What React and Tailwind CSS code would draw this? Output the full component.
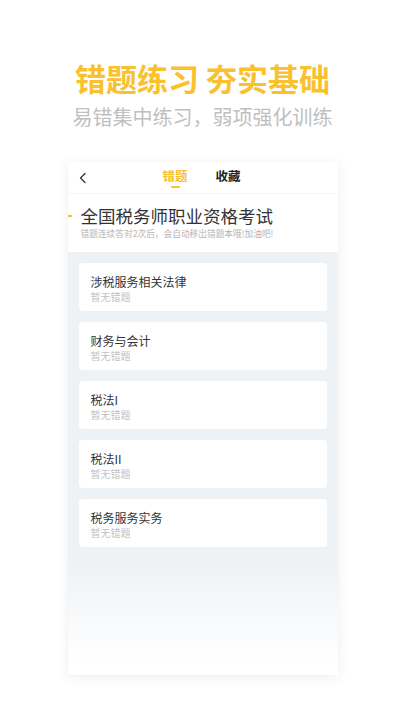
import React from "react";

const subjects = ["涉税服务相关法律", "财务与会计", "税法I", "税法II", "税务服务实务"];

function SubjectCard({ name }) {
    return (
        <div className="h-[48px] rounded-[4px] bg-white px-[12px] pt-[10px]">
            <p className="text-[12px] leading-[17px] text-[#333]">{name}</p>
            <p className="text-[10px] leading-[13px] text-[#c2c2c2]">暂无错题</p>
        </div>
    );
}

export default function App() {
    return (
        <div
            className="w-[405px] h-[720px] overflow-hidden bg-white"
            style={{ fontFamily: '"Noto Sans CJK SC", "Noto Sans", sans-serif' }}
        >
            <div className="pt-[58px] flex flex-col items-center">
                <h1 className="text-[31px] leading-[40px] font-bold text-[#f9c12e]">错题练习 夯实基础</h1>
                <p className="mt-[5px] text-[20px] leading-[28px] text-[#c0c0c0]">易错集中练习，弱项强化训练</p>
            </div>

            <div className="mx-auto mt-[31px] w-[270px] h-[513px] flex flex-col bg-white shadow-[0_2px_12px_rgba(0,0,0,0.07)]">
                <header className="relative h-[32px] flex items-center border-b border-[#f4f4f4]">
                    <svg className="absolute left-[10px] top-[10px]" width="10" height="12" viewBox="0 0 10 12" fill="none">
                        <path d="M7 1.5L2.5 6L7 10.5" stroke="#333" strokeWidth="1.3" strokeLinecap="round" strokeLinejoin="round" />
                    </svg>
                    <div className="flex w-full">
                        <div className="ml-[95px] flex flex-col items-center">
                            <span className="text-[12.5px] leading-[18px] font-bold text-[#f7c130]">错题</span>
                            <span className="mt-[1px] w-[9px] h-[2px] rounded-full bg-[#f7c130]" />
                        </div>
                        <div className="ml-[28px] flex flex-col items-center">
                            <span className="text-[12.5px] leading-[18px] font-bold text-[#222]">收藏</span>
                            <span className="mt-[1px] w-[9px] h-[2px]" />
                        </div>
                    </div>
                </header>

                <div className="h-[58px] flex">
                    <span className="mt-[21px] w-[4px] h-[2px] bg-[#f7c130]" />
                    <div className="ml-[9px] pt-[9px]">
                        <p className="text-[17.5px] leading-[25px] text-[#333]">全国税务师职业资格考试</p>
                        <p className="text-[8.7px] leading-[12px] text-[#b5b5b5]">错题连续答对2次后，会自动移出错题本哦!加油吧!</p>
                    </div>
                </div>

                <div className="flex-1 flex flex-col gap-[11px] px-[11px] pt-[11px] bg-linear-to-b from-[#eff2f5] from-[74%] to-white to-[97%]">
                    {subjects.map((s, i) => (
                        <SubjectCard key={i} name={s} />
                    ))}
                </div>
            </div>
        </div>
    );
}
